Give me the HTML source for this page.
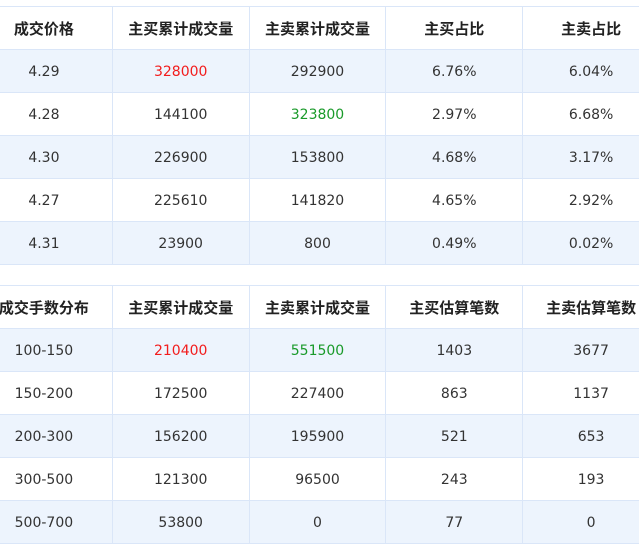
<!DOCTYPE html>
<html><head><meta charset="utf-8"><style>
html,body{margin:0;padding:0;background:#fff;width:639px;height:538px;overflow:hidden}
body{font-family:"DejaVu Sans","Noto Sans CJK SC",sans-serif;color:#333;font-size:14px}
table{position:absolute;left:-25px;border-collapse:collapse;table-layout:fixed;width:685px}
td,th{height:43px;box-sizing:border-box;border:1px solid #dae6f8;text-align:center;padding:2px 0 0 0;white-space:nowrap}
th{font-weight:bold;color:#222;background:#fff;font-family:"Noto Sans CJK SC",sans-serif;font-size:15px;padding:0}
tr.b td{background:#edf4fd}
.r{color:#f21c1c}.g{color:#1a9a2a}
</style></head><body>
<table style="top:6px">
<tr><th>成交价格</th><th>主买累计成交量</th><th>主卖累计成交量</th><th>主买占比</th><th>主卖占比</th></tr>
<tr class="b"><td>4.29</td><td class="r">328000</td><td>292900</td><td>6.76%</td><td>6.04%</td></tr>
<tr><td>4.28</td><td>144100</td><td class="g">323800</td><td>2.97%</td><td>6.68%</td></tr>
<tr class="b"><td>4.30</td><td>226900</td><td>153800</td><td>4.68%</td><td>3.17%</td></tr>
<tr><td>4.27</td><td>225610</td><td>141820</td><td>4.65%</td><td>2.92%</td></tr>
<tr class="b"><td>4.31</td><td>23900</td><td>800</td><td>0.49%</td><td>0.02%</td></tr>
</table>
<table style="top:285px">
<tr><th>成交手数分布</th><th>主买累计成交量</th><th>主卖累计成交量</th><th>主买估算笔数</th><th>主卖估算笔数</th></tr>
<tr class="b"><td>100-150</td><td class="r">210400</td><td class="g">551500</td><td>1403</td><td>3677</td></tr>
<tr><td>150-200</td><td>172500</td><td>227400</td><td>863</td><td>1137</td></tr>
<tr class="b"><td>200-300</td><td>156200</td><td>195900</td><td>521</td><td>653</td></tr>
<tr><td>300-500</td><td>121300</td><td>96500</td><td>243</td><td>193</td></tr>
<tr class="b"><td>500-700</td><td>53800</td><td>0</td><td>77</td><td>0</td></tr>
</table>
</body></html>
